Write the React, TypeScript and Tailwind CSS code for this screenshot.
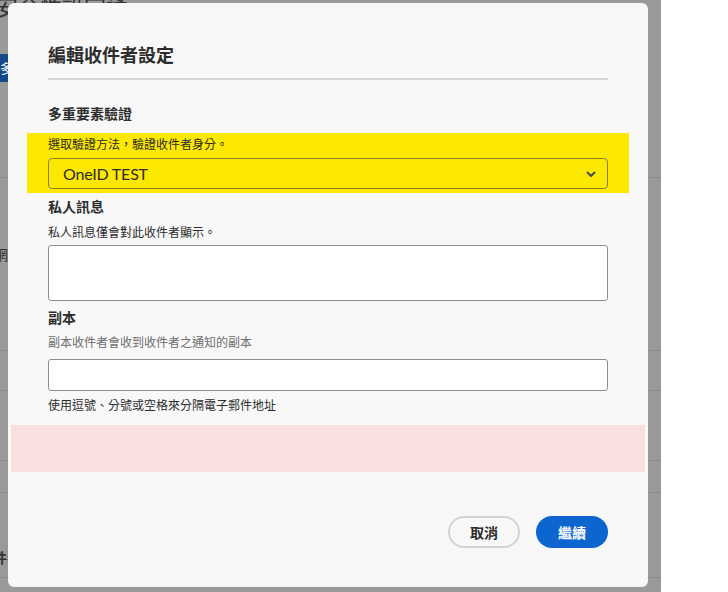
import React from 'react';

const font = { fontFamily: '"Noto Sans", "Noto Sans CJK TC", sans-serif' };

function Field({
  label,
  hint,
  hintMuted,
  hintGap,
  inputGap,
  children,
}: {
  label: string;
  hint?: string;
  hintMuted?: boolean;
  hintGap: string;
  inputGap: string;
  children: React.ReactNode;
}) {
  return (
    <div className="flex flex-col">
      <div className="text-[14px] font-bold text-[#2c2c2c] leading-[20px]">{label}</div>
      {hint && (
        <div className={`${hintGap} text-[12px] leading-[16px] ${hintMuted ? 'text-[#6e6e6e]' : 'text-[#2c2c2c]'}`}>{hint}</div>
      )}
      <div className={inputGap}>{children}</div>
    </div>
  );
}

export default function App() {
  return (
    <div className="relative w-[728px] h-[592px] bg-white overflow-hidden" style={font}>
      {/* dimmed page behind the dialog */}
      <div className="absolute left-0 top-0 w-[661px] h-[592px] bg-[#999999]">
        <div className="absolute left-[-4px] top-[-10px] text-[22px] text-[#333] whitespace-nowrap">安全性設定通</div>
        <div className="absolute left-0 top-[54px] w-[10px] h-[28px] bg-[#174a8c] text-white text-[13px] leading-[28px]">多</div>
        <div className="absolute left-0 top-[177px] w-[661px] h-px bg-[#8a8a8a]" />
        <div className="absolute left-[-6px] top-[244px] text-[14px] text-[#333]">網</div>
        <div className="absolute left-0 top-[350px] w-[661px] h-px bg-[#8a8a8a]" />
        <div className="absolute left-0 top-[390px] w-[661px] h-px bg-[#8a8a8a]" />
        <div className="absolute left-0 top-[460px] w-[661px] h-px bg-[#8a8a8a]" />
        <div className="absolute left-0 top-[492px] w-[661px] h-px bg-[#8a8a8a]" />
        <div className="absolute left-[-7px] top-[547px] text-[14px] font-bold text-[#333]">件者</div>
        <div className="absolute left-0 top-[577px] w-[661px] h-px bg-[#8a8a8a]" />
      </div>

      {/* dialog */}
      <div className="absolute left-[8px] top-[3px] w-[640px] h-[584px] bg-[#f8f8f8] rounded-[6px] flex flex-col">
        <div className="px-[40px] pt-[40px]">
          <h1 className="text-[18px] font-bold text-[#2c2c2c] leading-[24px]">編輯收件者設定</h1>
          <div className="mt-[11px] h-[2px] bg-[#d5d5d5]" />
          <div className="mt-[24px] text-[14px] font-bold text-[#2c2c2c] leading-[20px]">多重要素驗證</div>
        </div>

        <div className="mx-[19px] mt-[9px] bg-[#fde800] px-[21px] pt-[3px] pb-[4px]">
          <div className="text-[12px] leading-[18px] text-[#2c2c2c]">選取驗證方法，驗證收件者身分。</div>
          <div className="mt-[4px] h-[31px] border border-[#8c7f1c] rounded-[4px] flex items-center justify-between pl-[14px] pr-[10px]">
            <span className="text-[16px] tracking-[-0.2px] text-[#2c2c2c]" style={{ fontFamily: 'Lato, "Noto Sans", sans-serif' }}>OneID TEST</span>
            <svg width="12" height="12" viewBox="0 0 12 12" fill="none">
              <path d="M2.5 4.5 6 8l3.5-3.5" stroke="#4b4b4b" strokeWidth="2" strokeLinecap="round" strokeLinejoin="round" />
            </svg>
          </div>
        </div>

        <div className="px-[40px] mt-[4px] flex flex-col gap-[7px]">
          <Field label="私人訊息" hint="私人訊息僅會對此收件者顯示。" hintGap="mt-[8px]" inputGap="mt-[4px]">
            <div className="h-[56px] bg-white border border-[#8e8e8e] rounded-[3px]" />
          </Field>
          <Field label="副本" hint="副本收件者會收到收件者之通知的副本" hintMuted hintGap="mt-[7px]" inputGap="mt-[8px]">
            <div className="h-[32px] bg-white border border-[#8e8e8e] rounded-[3px]" />
          </Field>
          <div className="text-[12px] leading-[16px] text-[#2c2c2c] mt-[0px]">使用逗號、分號或空格來分隔電子郵件地址</div>
        </div>

        <div className="mx-[3px] mt-[11px] h-[47px] bg-[#f8e0e0]" />

        <div className="mt-[44px] px-[40px] flex justify-end gap-[16px]">
          <button className="w-[72px] h-[32px] rounded-full border-2 border-[#d3d3d3] text-[14px] font-bold text-[#2c2c2c]">取消</button>
          <button className="w-[72px] h-[32px] rounded-full bg-[#0d66d0] text-[14px] font-bold text-white">繼續</button>
        </div>
      </div>
    </div>
  );
}
